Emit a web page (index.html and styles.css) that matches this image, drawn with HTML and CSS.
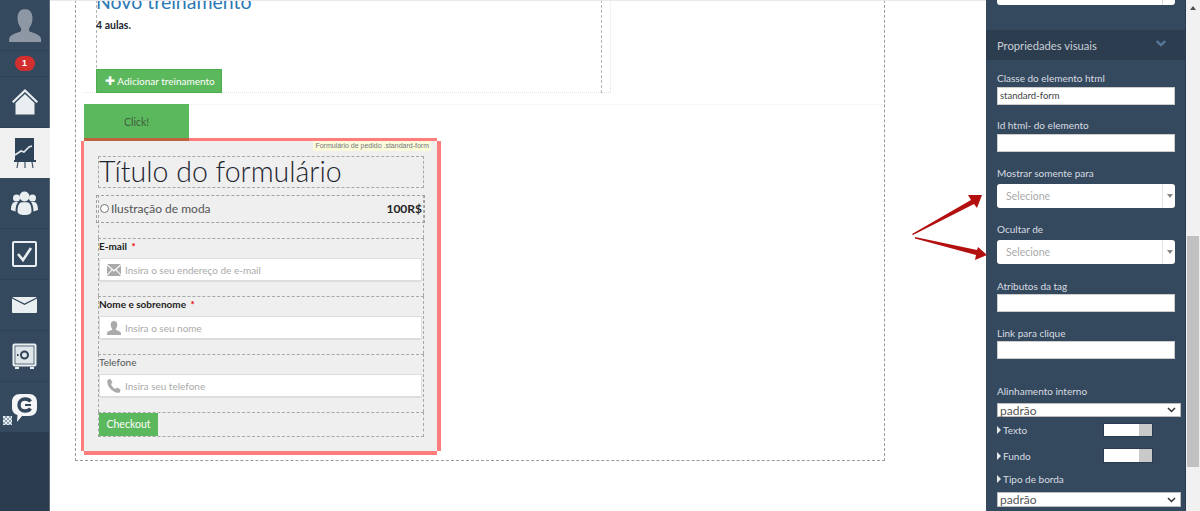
FILE: index.html
```html
<!DOCTYPE html>
<html lang="pt">
<head>
<meta charset="utf-8">
<title>Editor</title>
<link rel="stylesheet" href="styles.css">
</head>
<body>
<div class="app">
  <nav class="sidebar">
    <div class="nav-item nav-avatar">
      <svg width="34" height="34" viewBox="0 0 34 34"><path fill="#8d98a4" d="M17 1c-5 0-7.500 4-7.500 9 0 4 1.500 8 3.600 10.300v2.700c-2 1.800-12 2.800-12 8.500v2.500h32v-2.500c0-5.700-10-6.700-12-8.500v-2.700c2.100-2.300 3.400-6.300 3.400-10.300 0-5-2.500-9-7.500-9z"/></svg>
    </div>
    <div class="nav-item nav-badge"><span class="badge">1</span></div>
    <div class="nav-item nav-tall">
      <svg width="28" height="26" viewBox="0 0 28 26"><path fill="#e9eef0" d="M14 0 27 12.500l-1.500 1.500L14 3 2.500 14 1 12.500z"/><path fill="#e9eef0" d="M14 5 23.500 14v11.500h-19V14z"/></svg>
    </div>
    <div class="nav-item nav-active">
      <svg width="22" height="30" viewBox="0 0 22 30"><rect x="1" y="0" width="19" height="22" fill="#2f4358"/><path fill="none" stroke="#e6e9ec" stroke-width="1.600" d="M1 17l6-4 3 1 5-5 3-1"/><path fill="#2f4358" d="M0 22h22v2H0z"/><path stroke="#40556a" stroke-width="1.200" d="M4 24l-1 6M11 24v6M18 24l1 6"/></svg>
    </div>
    <div class="nav-item">
      <svg width="27" height="24" viewBox="0 0 27 24"><g fill="#e9eef0"><circle cx="5.500" cy="7" r="3.500"/><circle cx="21.500" cy="7" r="3.500"/><path d="M0 19c0-5 1.500-8 4-8h3c-1.500 2-2.500 5-2.500 9.500zM27 19c0-5-1.500-8-4-8h-3c1.500 2 2.500 5 2.500 9.500z"/><circle cx="13.500" cy="5.500" r="5"/><path d="M6.500 20c0-6 2-8.800 4.500-8.800h5c2.500 0 4.500 2.800 4.500 8.800 0 3-3 4-7 4s-7-1-7-4z"/></g></svg>
    </div>
    <div class="nav-item">
      <svg width="25" height="26" viewBox="0 0 25 26"><rect x="1" y="1" width="23" height="24" rx="1" fill="none" stroke="#e9eef0" stroke-width="2"/><path fill="none" stroke="#e9eef0" stroke-width="2.600" d="M6 13l5 6 8-12"/></svg>
    </div>
    <div class="nav-item">
      <svg width="25" height="16" viewBox="0 0 25 16"><path fill="#e9eef0" d="M0 1.500 12.500 8 25 1.500V15a1 1 0 0 1-1 1H1a1 1 0 0 1-1-1z"/><path fill="#e9eef0" d="M1 0h23l.5.500L12.500 6.500.5.500z"/></svg>
    </div>
    <div class="nav-item">
      <svg width="25" height="26" viewBox="0 0 25 26"><rect x=".5" y=".5" width="24" height="23" rx="2" fill="#e9eef0"/><rect x="3" y="3" width="19" height="18" fill="#dfe6ea" stroke="#3a4f64" stroke-width=".8"/><circle cx="12.500" cy="12" r="3.500" fill="none" stroke="#2f4358" stroke-width="2"/><path fill="#2f4358" d="M5 11h1.500v2H5z"/><path fill="#e9eef0" d="M3 24h4v2H3zM18 24h4v2h-4z"/></svg>
    </div>
    <div class="nav-item nav-chat">
      <svg width="25" height="28" viewBox="0 0 25 28"><path fill="#f3f5f6" d="M8 0h9c5 0 8 3 8 8v6c0 5-3 8-8 8h-7l-5 6 .5-7C2 20 0 17 0 14V8c0-5 3-8 8-8z"/><path fill="none" stroke="#33475c" stroke-width="3.400" d="M18.500 7.500c-1-1.500-3-2.500-5.500-2.500C9.500 5 7 7.500 7 11s2.500 6 6 6c2.500 0 4.500-1 5.500-2.500"/><path fill="#33475c" d="M13 10h6v2h-6z"/></svg>
      <span class="qr"></span>
    </div>
  </nav>

  <main class="main">
    <div class="stage">
      <div class="course-row">
        <div class="course-cell">
          <div class="course">
            <h2 class="course-title">Novo treinamento</h2>
            <p class="course-meta">4 aulas.</p>
            <a class="add-btn"><span class="plus">✚</span> Adicionar treinamento</a>
          </div>
        </div>
      </div>
      <a class="click-btn">Click!</a>
      <form class="order">
        <span class="hl hl-top"></span><span class="hl hl-right"></span><span class="hl hl-bottom"></span><span class="hl hl-left"></span>
        <span class="order-tag">Formulário de pedido .standard-form</span>
        <div class="blk blk-title"><h1 class="form-title">Título do formulário</h1></div>
        <div class="blk blk-product">
          <div class="product">
            <span class="radio"></span><span class="product-name">Ilustração de moda</span><b class="price">100R$</b>
          </div>
        </div>
        <div class="blk blk-field">
          <label class="f-label f-strong">E-mail <i class="req">*</i></label>
          <div class="f-input">
            <svg width="14" height="12" viewBox="0 0 14 12"><path fill="#aaa" d="M0 0h14L7 6zM0 1.500l4.500 4L0 10.500zM14 1.500l-4.500 4 4.500 5zM5.200 6.200 7 7.800l1.800-1.600L14 12H0z"/></svg>
            <span>Insira o seu endereço de e-mail</span>
          </div>
        </div>
        <div class="blk blk-field">
          <label class="f-label f-strong">Nome e sobrenome <i class="req">*</i></label>
          <div class="f-input">
            <svg width="14" height="14" viewBox="0 0 14 14"><path fill="#aaa" d="M7 0c-2 0-3.300 1.600-3.300 3.800 0 1.600.6 3 1.500 3.900v1C4 9.500 0 10 0 12.500V14h14v-1.500c0-2.500-4-3-5.200-3.800v-1c.9-.9 1.500-2.300 1.500-3.900C10.300 1.600 9 0 7 0z"/></svg>
            <span>Insira o seu nome</span>
          </div>
        </div>
        <div class="blk blk-field">
          <label class="f-label">Telefone</label>
          <div class="f-input">
            <svg width="14" height="14" viewBox="0 0 14 14"><path fill="#aaa" d="M1 .5 3.500 0l2 3.500L4 5c.5 2 2.500 4.300 4.500 5l1.500-1.500 3.500 2-.5 2.500c-1 1-2.500 1-4 .5C5 12 1.500 8.500.5 4.500.2 3 .2 1.500 1 .5z"/></svg>
            <span>Insira seu telefone</span>
          </div>
        </div>
        <div class="blk blk-submit"><a class="checkout">Checkout</a></div>
      </form>
    </div>
  </main>

  <aside class="panel">
    <div class="stub"><span class="stub-sep"></span></div>
    <div class="panel-head">
      <span>Propriedades visuais</span>
      <svg width="10" height="7" viewBox="0 0 10 7"><path fill="none" stroke="#54789a" stroke-width="2.400" d="M.8 1 5 5 9.200 1"/></svg>
    </div>
    <div class="field"><label>Classe do elemento html</label><div class="text-input">standard-form</div></div>
    <div class="field field-wide"><label>Id html- do elemento</label><div class="text-input"></div></div>
    <div class="field field-sel"><label>Mostrar somente para</label><div class="pick"><span>Selecione</span><i class="pick-arrow"></i></div></div>
    <div class="field field-sel field-wide"><label>Ocultar de</label><div class="pick"><span>Selecione</span><i class="pick-arrow"></i></div></div>
    <div class="field field-tight"><label>Atributos da tag</label><div class="text-input"></div></div>
    <div class="field field-tight"><label>Link para clique</label><div class="text-input"></div></div>
    <div class="field-align">
      <label>Alinhamento interno</label>
      <div class="native"><span>padrão</span><svg width="9" height="6" viewBox="0 0 9 6"><path fill="none" stroke="#333" stroke-width="1.500" d="M1 1l3.500 3.500L8 1"/></svg></div>
    </div>
    <div class="color-row"><span class="tri-label"><i class="tri"></i>Texto</span><span class="swatch"></span></div>
    <div class="color-row color-row-2"><span class="tri-label"><i class="tri"></i>Fundo</span><span class="swatch"></span></div>
    <div class="border-row"><span class="tri-label"><i class="tri"></i>Tipo de borda</span></div>
    <div class="native native-b"><span>padrão</span><svg width="9" height="6" viewBox="0 0 9 6"><path fill="none" stroke="#333" stroke-width="1.500" d="M1 1l3.500 3.500L8 1"/></svg></div>
  </aside>

  <div class="scrollbar">
    <i class="scroll-up"></i>
    <i class="scroll-thumb"></i>
  </div>

  <svg class="arrows" width="80" height="80" viewBox="0 0 80 80">
    <path fill="#b30f0f" d="M2 41 61 7 58 2 72 2 67 15 64 11 3 42z"/>
    <path fill="#b30f0f" d="M5 44 67 57 68 54 77 62 65 67 66 62 5 45.500z"/>
  </svg>
</div>
</body>
</html>
```
FILE: styles.css
```css
* { box-sizing: border-box; }
html, body { margin: 0; padding: 0; height: 100%; overflow: hidden; background: #fff; }
body { font-family: Lato, "Liberation Sans", sans-serif; color: #222; }
a { display: block; }
h1, h2, p { margin: 0; font-weight: normal; }

.app { position: relative; display: flex; width: 1200px; height: 511px; overflow: hidden; }

/* sidebar */
.sidebar { flex: 0 0 50px; height: 511px; background: #2b3c4f; border-right: 1px solid #5d6b79; display: flex; flex-direction: column; }
.nav-item { position: relative; height: 51px; background: #34485e; border-bottom: 1px solid #2e4055; display: flex; align-items: center; justify-content: center; }
.nav-badge { height: 26px; }
.nav-active { background: #f0f0f0; height: 50px; margin-right: -1px; border-bottom: 0; }
.nav-chat { padding-top: 2px; border-bottom: 0; height: 50px; }
.badge { display: block; width: 20px; height: 15px; border-radius: 8px; background: #d32f2f; color: #fff; font: bold 9px/15px "Liberation Sans", sans-serif; text-align: center; }
.qr { position: absolute; left: 3px; bottom: 7px; width: 9px; height: 9px; background: repeating-conic-gradient(#8fa3b3 0 25%, #e6ecef 0 50%) 0 0 / 4px 4px; }

/* main */
.main { flex: 0 0 936px; height: 511px; border-top: 1px solid #e8e8ee; padding-left: 25px; overflow: hidden; }
.stage { width: 810px; height: 481px; margin-top: -21px; border: 1px dashed #9a9a9a; border-width: 0 1px 1px; padding: 0 0 0 8px; }
.course-row { width: 800px; height: 125px; border-bottom: 1px dotted #eee; }
.course-cell { width: 527px; height: 113px; padding-left: 12px; border: 1px dotted #e2e2e2; border-width: 0 1px 1px 0; }
.course { position: relative; width: 506px; height: 113px; border: 1px dashed #b4b4b4; border-width: 0 1px; }
.course-title { margin-left: -1px; padding-top: 9px; font: 400 19.500px/26px Lato, sans-serif; color: #2a79b5; white-space: nowrap; }
.course-meta { margin: 3px 0 0 -1px; font: 700 10.500px/14px Lato, sans-serif; color: #1d2530; }
.add-btn { position: absolute; left: -1px; bottom: 0; width: 126px; height: 24px; background: #5cb85c; border: 1px solid #4cae4c; color: #fff; font-size: 10px; line-height: 22px; padding-left: 8px; white-space: nowrap; }
.plus { font-size: 12px; }
.click-btn { width: 105px; height: 37px; margin-top: -1px; background: #5cb85c; color: #3f5f3f; font-size: 10.500px; line-height: 36px; text-align: center; }

/* order form */
.order { position: relative; width: 353px; height: 310px; background: #efefef; padding: 15px 13px 0 14px; }
.hl { position: absolute; background: rgba(255, 45, 45, .62); }
.hl-top { left: 0; right: 0; top: -3px; height: 3px; }
.hl-right { top: 0; right: -4px; bottom: 0; width: 4px; }
.hl-bottom { left: 0; right: 0; bottom: -4px; height: 4px; }
.hl-left { top: 0; bottom: 0; left: -3px; width: 3px; }
.order-tag { position: absolute; top: 0; right: 6px; height: 10px; padding: 0 2px; background: #fbfbdc; color: #777; font: 7px/10px "Liberation Sans", sans-serif; white-space: nowrap; }
.blk { width: 326px; border: 1px dashed #a8a8a8; border-width: 1px 1px 0; }
.blk-title { height: 32px; margin-bottom: 7px; border-width: 1px; }
.form-title { font: 300 28.500px/29px Lato, sans-serif; color: #1d2530; white-space: nowrap; }
.blk-product { position: relative; height: 43px; border-width: 0 1px; }
.product { position: absolute; left: -3px; right: -2px; top: 0; height: 28px; padding: 0 0 2px 3px; border: 1px dashed #a0a0a0; display: flex; align-items: center; font-size: 12px; color: #555; }
.radio { width: 9px; height: 9px; border: 1px solid #777; border-radius: 50%; background: #fff; margin-right: 2px; }
.price { margin-left: auto; padding-right: 2px; font-size: 12px; color: #222; }
.blk-field { height: 58px; padding: 0 1px 0 0; }
.f-label { display: block; height: 19px; font-size: 10px; line-height: 14px; color: #555; }
.f-strong { font-weight: 700; color: #222; }
.req { color: #e00; font-style: normal; padding-left: 2px; }
.f-input { width: 323px; height: 24px; background: #fff; border: 1px solid #ddd; border-width: 1px 1px 2px 1px; border-radius: 2px; display: flex; align-items: center; padding-left: 7px; gap: 4px; color: #aaa; font-size: 10px; }
.blk-submit { height: 25px; border-width: 1px; }
.checkout { width: 59px; height: 23px; background: #5cb85c; color: #fff; font-size: 10.500px; line-height: 22px; text-align: center; }

/* panel */
.panel { flex: 0 0 200px; height: 511px; background: #34485e; border-right: 1px solid #2b3c4f; color: #d8dde2; font-size: 10px; padding: 0 0 0 11px; overflow: hidden; }
.stub { width: 178px; height: 5px; background: #fff; border-radius: 0 0 3px 3px; position: relative; }
.stub-sep { position: absolute; left: 165px; top: 0; bottom: 0; width: 1px; background: #ddd; }
.panel-head { height: 30px; margin: 25px 0 11px -11px; padding: 0 19px 0 11px; background: #2d3d50; display: flex; align-items: center; justify-content: space-between; font-size: 11.200px; color: #c9ced4; }
.panel-head svg { margin-top: -4px; }
.field { width: 178px; margin-bottom: 13px; }
.field label, .field-align label { display: block; height: 14px; line-height: 14px; margin-bottom: 2px; white-space: nowrap; }
.text-input { height: 18px; background: #fff; border: 1px solid #ccc; color: #444; font-size: 9.500px; line-height: 16px; padding-left: 2px; }
.field-wide { margin-bottom: 14px; }
.field-sel label { margin-bottom: 4px; }
.field-sel { margin-bottom: 14px; }
.field-sel.field-wide { margin-bottom: 15px; }
.field-tight { margin-bottom: 14px; }
.field-tight label { margin-bottom: 1px; }
.pick { position: relative; height: 24px; background: #fff; border-radius: 3px; padding-left: 9px; color: #aaa; font-size: 10.500px; line-height: 24px; }
.pick-arrow { position: absolute; right: 0; top: 0; bottom: 0; width: 13px; border-left: 1px solid #e2e2e2; }
.pick-arrow::after { content: ""; position: absolute; left: 4px; top: 10px; border: 3px solid transparent; border-top: 4px solid #888; border-bottom: 0; }
.field-align { margin-top: 25px; }
.field-align label { margin-bottom: 5px; }
.native { width: 184px; height: 14px; background: #fff; border: 1px solid #bbb; display: flex; align-items: center; justify-content: space-between; padding: 0 4px 0 2px; color: #555; font-size: 12px; }
.color-row { width: 156px; height: 14px; margin-top: 6px; display: flex; align-items: center; justify-content: space-between; }
.color-row-2 { margin-top: 11px; height: 15px; }
.border-row { height: 14px; margin-top: 10px; margin-bottom: 5px; }
.tri-label { display: flex; align-items: center; }
.tri { width: 0; height: 0; border: 4px solid transparent; border-left: 4px solid #e8e8e8; border-right: 0; margin-right: 2px; }
.swatch { width: 50px; height: 100%; background: linear-gradient(90deg, #fff 72%, #c9c9c9 72%); border: 1px solid #2b3c4f; }
.native-b { height: 15px; }

/* scrollbar */
.scrollbar { position: relative; flex: 1; height: 511px; background: #f1f1f1; }
.scroll-up { position: absolute; left: 4px; top: 6px; border: 3px solid transparent; border-bottom: 4px solid #505050; border-top: 0; }
.scroll-thumb { position: absolute; left: 1px; right: 1px; top: 236px; height: 231px; background: #c1c1c1; }

/* annotation arrows */
.arrows { position: absolute; left: 910px; top: 193px; }
```
